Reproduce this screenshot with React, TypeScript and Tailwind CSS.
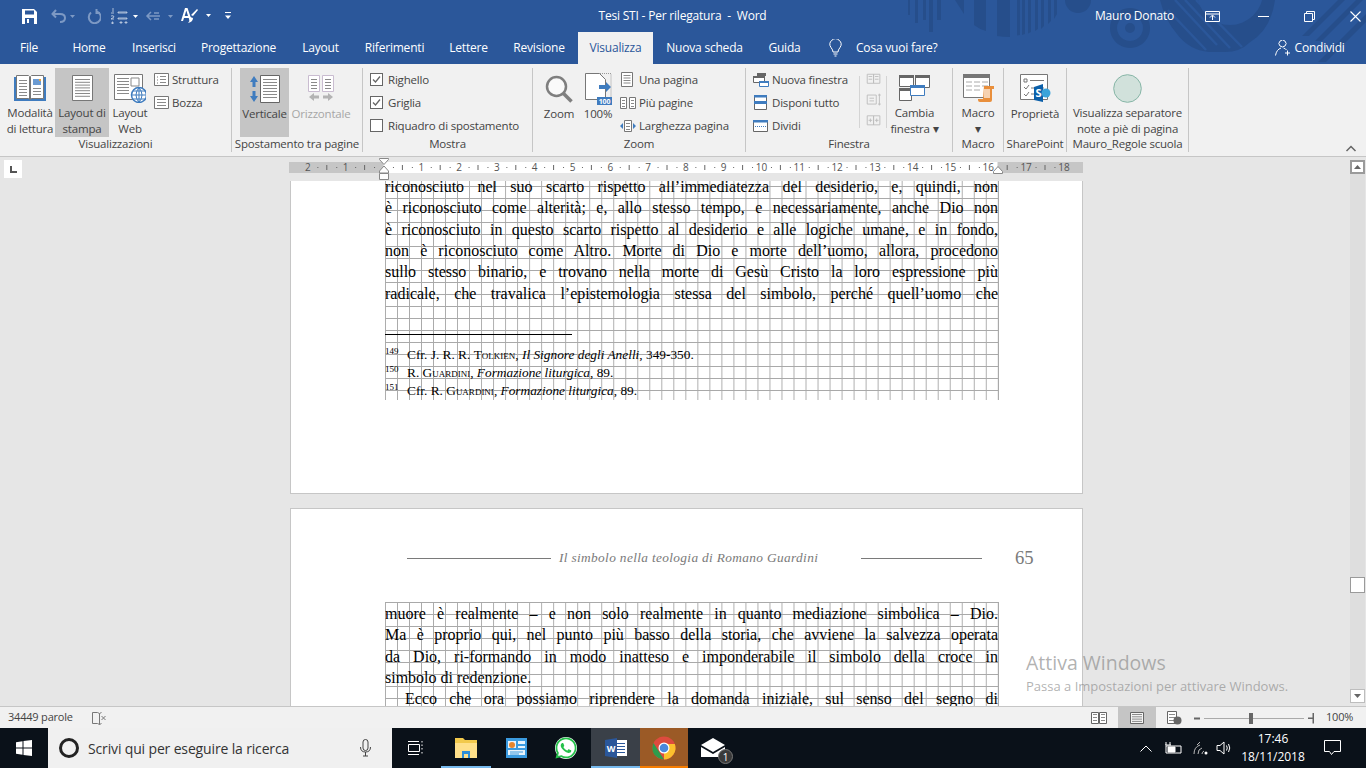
import { ReactNode } from 'react';
import { FaWhatsapp } from 'react-icons/fa';

const bodyLines1 = [
  'riconosciuto nel suo scarto rispetto all’immediatezza del desiderio, e, quindi, non',
  'è riconosciuto come alterità; e, allo stesso tempo, e necessariamente, anche Dio non',
  'è riconosciuto in questo scarto rispetto al desiderio e alle logiche umane, e in fondo,',
  'non è riconosciuto come Altro. Morte di Dio e morte dell’uomo, allora, procedono',
  'sullo stesso binario, e trovano nella morte di Gesù Cristo la loro espressione più',
  'radicale, che travalica l’epistemologia stessa del simbolo, perché quell’uomo che',
];

const bodyLines2 = [
  'muore è realmente – e non solo realmente in quanto mediazione simbolica – Dio.',
  'Ma è proprio qui, nel punto più basso della storia, che avviene la salvezza operata',
  'da Dio, ri-formando in modo inatteso e imponderabile il simbolo della croce in',
];

const tabs = [
  { label: 'File', w: 'w-[58px]' },
  { label: 'Home', w: 'w-[62px]' },
  { label: 'Inserisci', w: 'w-[68px]' },
  { label: 'Progettazione', w: 'w-[101px]' },
  { label: 'Layout', w: 'w-[63px]' },
  { label: 'Riferimenti', w: 'w-[85px]' },
  { label: 'Lettere', w: 'w-[63px]' },
  { label: 'Revisione', w: 'w-[78px]' },
];

const GRID =
  'bg-[linear-gradient(to_right,#a9a9a9_1px,transparent_1px),linear-gradient(to_bottom,#a9a9a9_1px,transparent_1px)] bg-[size:12.02px_12px]';

function TitlePattern() {
  const c = '#264e8b';
  return (
    <svg className="absolute left-0 top-0" width="1366" height="64" viewBox="0 0 1366 64" aria-hidden="true">
      <g fill={c}>
        <rect x="908" y="0" width="2" height="15" />
        <rect x="915" y="0" width="3" height="23" />
        <rect x="923" y="0" width="3" height="20" />
        <rect x="929" y="0" width="4" height="32" />
        <rect x="937" y="0" width="4" height="20" />
        <path d="M955 0h9v14z" />
        <path d="M974 0h12v31q-7-2-12-6z" />
        <path d="M997 0h13v37q-7 0-13-1z" />
        <path d="M1017 0h3v35l-3 .5zM1022 0h3v34l-3 1zM1028 0h3v32l-3 1.500zM1035 0h3v29l-3 2zM1041 0h3v26l-3 3zM1048 0h3v21l-3 3zM1054 0h3v14l-3 5z" />
        <circle cx="1078" cy="0" r="13" />
        <path fillRule="evenodd" d="M1130 8a20 20 0 1 0 .01 0zM1130 15a13 13 0 1 1-.01 0z" />
        <circle cx="1130" cy="28" r="5" />
        <path d="M1160 0h115q-4 30-26 43q-9 9-24 9h-16q-20-2-32-18q-12-14-17-34z" />
        <path d="M1302 36l36-36h7l-36 36zM1315 41l41-41h7l-41 41zM1318 62l48-48v8l-40 40z" />
      </g>
      <g stroke="#2b579a" strokeWidth="2.500" fill="none">
        <path d="M1175 0l42 45M1185 0l45 48M1196 0l46 47M1168 10l38 40" />
      </g>
      <circle cx="1230" cy="-8" r="33" fill="#2b579a" />
    </svg>
  );
}

function QuickAccess() {
  return (
    <div className="flex items-center">
      <svg className="ml-[22px]" width="15" height="15" viewBox="0 0 15 15">
        <path fill="#fff" d="M0 0h12l3 3v12H0z" />
        <path fill="#2b579a" d="M3 1.500h9v4H3zM3 9h9v6H3z" />
        <path fill="#fff" d="M5 10h2v4H5z" />
      </svg>
      <svg className="ml-[14px]" width="24" height="14" viewBox="0 0 24 14" fill="none" stroke="#7d99c4" strokeWidth="2">
        <path d="M5 1L1.500 5 5 8.500M2 5h7q5 0 5 4t-5 4" />
        <path fill="#7d99c4" stroke="none" d="M19 6h5l-2.500 3z" />
      </svg>
      <svg className="ml-[11px]" width="15" height="15" viewBox="0 0 15 15" fill="none" stroke="#7d99c4" strokeWidth="2">
        <path d="M5 3.500A6 6 0 1 0 11 2.600M10.500 0v4h3.500" />
      </svg>
      <svg className="ml-[9px]" width="30" height="16" viewBox="0 0 30 16" fill="#fff">
        <path d="M3 0v4M1 5h3M1 8q3-1 3 1l-3 2h3M8 4h9v1H8zM8 10h9v1H8zM10 14h2v1h-2zM15 14h2v1h-2zM2 14h1v2H2z" stroke="#fff" strokeWidth=".6" fill="none" />
        <path d="M23 7h5l-2.500 3z" />
      </svg>
      <svg className="ml-[5px]" width="28" height="14" viewBox="0 0 28 14" fill="none" stroke="#7d99c4" strokeWidth="1.500">
        <path d="M6 3L2 7l4 4M2 7h13M9 4h5M9 10h5" />
        <path fill="#7d99c4" stroke="none" d="M23 6h5l-2.500 3z" />
      </svg>
      <svg className="ml-[7px]" width="36" height="18" viewBox="0 0 36 18">
        <path fill="#fff" d="M5 1h2.500L12 14H9.700l-1-3H4l-1 3H1zM4.700 9h3.300L6.300 3.500z" />
        <path fill="#fff" d="M17 2l1 1-5 6-2-1zM10 10l3 1q0 4-5 5 2-2 2-6z" />
        <path fill="#fff" d="M26 7h5l-2.500 3z" />
      </svg>
      <svg className="ml-[9px]" width="6" height="8" viewBox="0 0 6 8" fill="#fff">
        <path d="M0 0h6v1H0zM0 3.500h6L3 7z" />
      </svg>
    </div>
  );
}

function TitleBar() {
  return (
    <div className="relative flex h-8 items-center text-white">
      <div className="w-[360px]">
        <QuickAccess />
      </div>
      <div className="w-[645px] text-center text-[12px] whitespace-pre tracking-[-0.2px]">Tesi STI - Per rilegatura  -  Word</div>
      <div className="ml-[90px] w-[92px] text-[12px] tracking-[-0.2px]">Mauro Donato</div>
      <svg className="ml-[18px]" width="15" height="11" viewBox="0 0 15 11" fill="none" stroke="#fff">
        <path d="M.5.500h14v10H.5zM.5 3h14M7.500 9V4.500M5 6.500l2.500-2.500L10 6.500" />
      </svg>
      <svg className="ml-[38px]" width="11" height="1" viewBox="0 0 11 1">
        <rect width="11" height="1" fill="#fff" />
      </svg>
      <svg className="ml-[35px]" width="11" height="11" viewBox="0 0 11 11" fill="none" stroke="#fff">
        <path d="M.5 2.500h8v8h-8zM2.500 2.500v-2h8v8h-2" />
      </svg>
      <svg className="ml-[35px]" width="11" height="11" viewBox="0 0 11 11" stroke="#fff" strokeWidth="1.100">
        <path d="M.5.500l10 10M10.500.500l-10 10" />
      </svg>
    </div>
  );
}

function TabBar() {
  return (
    <div className="relative flex h-8 items-center text-[12px] tracking-[-0.2px] text-white">
      {tabs.map((t) => (
        <div key={t.label} className={`${t.w} text-center`}>
          {t.label}
        </div>
      ))}
      <div className="flex h-8 w-[75px] items-center justify-center bg-[#f1f1f1] text-[#2b579a]">Visualizza</div>
      <div className="w-[103px] text-center">Nuova scheda</div>
      <div className="w-[57px] text-center">Guida</div>
      <svg className="ml-[16px]" width="13" height="18" viewBox="0 0 13 18" fill="none" stroke="#fff">
        <path d="M4 13q0-2-2-4.500a5.500 5.500 0 1 1 9 0Q9 11 9 13zM4.500 15h4M5.500 17h2" />
      </svg>
      <div className="ml-[14px] text-[12px]">Cosa vuoi fare?</div>
      <svg className="ml-[337px]" width="16" height="16" viewBox="0 0 16 16" fill="none" stroke="#fff">
        <path d="M5 6a3.500 3.500 0 1 1 5 0q-2.500 2-5 0zM.5 15.500q1-6 5.500-7.500M8.500 8q2 .5 3 2M12.500 10.500v5M10 13h5" />
      </svg>
      <div className="ml-[4px] text-[12px]">Condividi</div>
    </div>
  );
}

function BigButton({
  icon,
  lines,
  w,
  on,
  off,
}: {
  icon: ReactNode;
  lines: string[];
  w: string;
  on?: boolean;
  off?: boolean;
}) {
  return (
    <div className={`${w} flex h-[69px] flex-col items-center ${on ? 'bg-[#c5c5c5]' : ''} ${off ? 'text-[#a6a6a6]' : ''}`}>
      <div className="flex h-[38px] w-full items-center justify-center pt-[3px]">{icon}</div>
      {lines.map((l) => (
        <div key={l} className="h-4 whitespace-nowrap text-center leading-4">
          {l}
        </div>
      ))}
    </div>
  );
}

function SmallRow({ icon, label, w = 'w-[18px]' }: { icon: ReactNode; label: string; w?: string }) {
  return (
    <div className="flex h-[23px] items-center whitespace-nowrap">
      <div className={`${w} flex shrink-0 justify-start`}>{icon}</div>
      <span>{label}</span>
    </div>
  );
}

function Group({ label, w, children }: { label: string; w: string; children: ReactNode }) {
  return (
    <div className={`${w} relative flex h-[84px] shrink-0 flex-col border-r border-[#c6c6c6]`}>
      <div className="flex h-[72px] pt-[-1px]">{children}</div>
      <div className="-mt-[1px] h-4 whitespace-nowrap text-center leading-4 text-[#444]">{label}</div>
    </div>
  );
}

function Check({ on }: { on?: boolean }) {
  return (
    <svg width="13" height="13" viewBox="0 0 13 13" fill="none">
      <rect x=".5" y=".5" width="12" height="12" fill="#fff" stroke="#666" />
      {on && <path d="M3 6.500l2.500 2.500L10 3.500" stroke="#666" strokeWidth="1.300" />}
    </svg>
  );
}

const TextLines = ({ x, y, n, w, gap = 3 }: { x: number; y: number; n: number; w: number; gap?: number }) => (
  <g stroke="#8a8a8a">
    {Array.from({ length: n }, (_, i) => (
      <path key={i} d={`M${x} ${y + i * gap + 0.5}h${w}`} />
    ))}
  </g>
);

function Ribbon() {
  return (
    <div className="relative flex h-[93px] border-b border-[#c6c6c6] bg-[#f1f1f1] pt-1 text-[#444] text-[11.5px] tracking-[-0.2px]">
      <Group label="Visualizzazioni" w="w-[232px]">
        <div className="ml-[5px] flex pt-[0px]">
          <BigButton
            w="w-[50px]"
            lines={['Modalità', 'di lettura']}
            icon={
              <svg width="32" height="28" viewBox="0 0 32 28">
                <path fill="#3f7cbf" d="M0 3h32v24H0z" />
                <path fill="#fff" stroke="#777" d="M2.500 1.500h12l1 1v23l-1-1h-12zM29.500 1.500h-12l-1 1v23l1-1h12z" />
                <TextLines x={5} y={6} n={6} w={8} />
                <path fill="#6b9bd2" d="M19 5h8v6h-8z" />
                <path fill="#e8a33d" d="M25 5h2v2h-2z" />
                <TextLines x={19} y={14} n={3} w={8} />
              </svg>
            }
          />
          <BigButton
            w="w-[54px]"
            on
            lines={['Layout di', 'stampa']}
            icon={
              <svg width="21" height="26" viewBox="0 0 21 26">
                <path fill="#fff" stroke="#777" d="M.5.500h20v25H.5z" />
                <TextLines x={3} y={4} n={7} w={15} gap={2.800} />
              </svg>
            }
          />
          <BigButton
            w="w-[42px]"
            lines={['Layout', 'Web']}
            icon={
              <svg width="32" height="29" viewBox="0 0 32 29">
                <path fill="#fff" stroke="#777" d="M.5.500h28v25H.5z" />
                <TextLines x={3} y={4} n={6} w={12} />
                <path fill="#fff" stroke="#888" d="M17 4h8v8h-8z" />
                <circle cx="25" cy="21" r="7.500" fill="#fff" stroke="#3f7cbf" strokeWidth="1.500" />
                <path stroke="#3f7cbf" fill="none" d="M17.500 21h15M25 13.500v15M19 17h12M19 25h12M25 13.500q-6 7.500 0 15q6-7.500 0-15" />
              </svg>
            }
          />
        </div>
        <div className="ml-[3px] flex flex-col">
          <SmallRow
            label="Struttura"
            icon={
              <svg width="15" height="13" viewBox="0 0 15 13">
                <path fill="#fff" stroke="#777" d="M.5.500h14v12H.5z" />
                <path stroke="#777" strokeDasharray="1 1" d="M3 4h2M3 7h2M3 10h2" />
                <TextLines x={6} y={3} n={3} w={6} />
              </svg>
            }
          />
          <SmallRow
            label="Bozza"
            icon={
              <svg width="15" height="13" viewBox="0 0 15 13">
                <path fill="#fff" stroke="#777" d="M.5.500h14v12H.5z" />
                <TextLines x={3} y={3} n={3} w={9} />
              </svg>
            }
          />
        </div>
      </Group>
      <Group label="Spostamento tra pagine" w="w-[131px]">
        <div className="ml-[8px] flex">
          <BigButton
            w="w-[49px]"
            on
            lines={['Verticale']}
            icon={
              <svg width="30" height="28" viewBox="0 0 30 28">
                <path fill="#fff" stroke="#666" d="M10.500.500h19v27h-19z" />
                <TextLines x={13} y={4} n={7} w={14} />
                <path fill="#3f7cbf" d="M4 1l4 6H5.500v5h-3V7H0zM4 27l-4-6h2.500v-5h3v5H8z" />
              </svg>
            }
          />
          <div className="w-[2px]" />
          <BigButton
            w="w-[60px]"
            off
            lines={['Orizzontale']}
            icon={
              <svg width="26" height="27" viewBox="0 0 26 27">
                <path fill="#fff" stroke="#c9bcd0" d="M.5.500h11v16H.5zM14.500.500h11v16h-11z" />
                <TextLines x={3} y={4} n={4} w={6} />
                <TextLines x={17} y={4} n={4} w={6} />
                <path fill="#b3b3b3" d="M1 22l5-4v2.500h5v3H6V26zM25 22l-5-4v2.500h-5v3h5V26z" />
              </svg>
            }
          />
        </div>
      </Group>
      <Group label="Mostra" w="w-[170px]">
        <div className="ml-[7px] flex flex-col">
          <SmallRow w="w-[18px]" icon={<Check on />} label="Righello" />
          <SmallRow w="w-[18px]" icon={<Check on />} label="Griglia" />
          <SmallRow w="w-[18px]" icon={<Check />} label="Riquadro di spostamento" />
        </div>
      </Group>
      <Group label="Zoom" w="w-[213px]">
        <div className="ml-[5px] flex">
          <BigButton
            w="w-[42px]"
            lines={['Zoom']}
            icon={
              <svg width="28" height="28" viewBox="0 0 28 28" fill="none" stroke="#7f7f7f">
                <circle cx="11.500" cy="11.500" r="9.500" strokeWidth="2.500" fill="#fafafa" />
                <path d="M18.500 18.500l8 8" strokeWidth="3.500" />
              </svg>
            }
          />
          <BigButton
            w="w-[36px]"
            lines={['100%']}
            icon={
              <svg width="27" height="32" viewBox="0 0 27 32">
                <path fill="#fff" stroke="#777" d="M.5.500h14l6 6v20H.5z" />
                <path stroke="#999" strokeDasharray="1 1" fill="none" d="M15 .500h11v24" />
                <path fill="#3f7cbf" d="M14 12h7V9l5 5-5 5v-3h-7z" />
                <rect x="12" y="24" width="15" height="8" fill="#3f7cbf" />
                <text x="19.500" y="31" fontSize="7" fontWeight="bold" fill="#fff" textAnchor="middle">
                  100
                </text>
              </svg>
            }
          />
          <div className="ml-[4px] flex flex-col">
            <SmallRow
              w="w-[19px]"
              label="Una pagina"
              icon={
                <svg className="ml-[1px]" width="12" height="15" viewBox="0 0 12 15">
                  <path fill="#fff" stroke="#777" d="M.5.500h11v14H.5z" />
                  <TextLines x={2.500} y={3} n={4} w={7} gap={2.500} />
                </svg>
              }
            />
            <SmallRow
              w="w-[19px]"
              label="Più pagine"
              icon={
                <svg width="16" height="12" viewBox="0 0 16 12">
                  <path fill="#fff" stroke="#777" d="M.5.500h6v11h-6zM9.500.500h6v11h-6z" />
                  <TextLines x={2} y={3} n={3} w={3} />
                  <TextLines x={11} y={3} n={3} w={3} />
                </svg>
              }
            />
            <SmallRow
              w="w-[19px]"
              label="Larghezza pagina"
              icon={
                <svg width="16" height="12" viewBox="0 0 16 12">
                  <path fill="#fff" stroke="#777" d="M4.500.500h7v11h-7z" />
                  <TextLines x={6} y={3} n={3} w={4} />
                  <path fill="#3f7cbf" d="M0 6l3-3v6zM16 6l-3-3v6z" />
                </svg>
              }
            />
          </div>
        </div>
      </Group>
      <Group label="Finestra" w="w-[207px]">
        <div className="ml-[7px] flex flex-col">
          <SmallRow
            w="w-[19px]"
            label="Nuova finestra"
            icon={
              <svg width="16" height="14" viewBox="0 0 16 14">
                <path fill="#fff" stroke="#666" d="M.5 3.500h11v6H.5z" />
                <path fill="#666" d="M0 3h12v2H0zM4 0h9v3H4z" />
                <path fill="#fff" stroke="#3f7cbf" d="M6.500 8.500h9v5h-9z" />
                <path fill="#3f7cbf" d="M6 8h10v2H6z" />
              </svg>
            }
          />
          <SmallRow
            w="w-[19px]"
            label="Disponi tutto"
            icon={
              <svg className="ml-[1px]" width="13" height="15" viewBox="0 0 13 15">
                <path fill="#fff" stroke="#666" d="M.5.500h12v14H.5z" />
                <path fill="#3f7cbf" d="M0 0h13v2.500H0zM0 6h13v3H0z" />
              </svg>
            }
          />
          <SmallRow
            w="w-[19px]"
            label="Dividi"
            icon={
              <svg width="15" height="12" viewBox="0 0 15 12">
                <path fill="#fff" stroke="#666" d="M.5.500h14v11H.5z" />
                <path fill="#3f7cbf" d="M0 0h15v2.500H0z" />
                <path stroke="#3f7cbf" strokeDasharray="1 1" d="M2 6.500h11" />
              </svg>
            }
          />
        </div>
        <div className="ml-[11px] flex flex-col items-start border-l border-[#d4d4d4] pl-[6px] h-[52px] mt-[8px]">
          <svg className="-mt-[4px]" width="16" height="62" viewBox="0 0 16 62" fill="none" stroke="#bdbdbd">
            <path d="M.5 2.500h7v10h-7zM7.500 2.500h7v10h-7zM2 5h4M2 8h4M9 5h4M9 8h4" />
            <path d="M.5 25.500h10v10H.5zM3 29h5M3 32h5M14 24v13M12.500 25.500h3M12.500 35.500h3" />
            <path d="M.5 48.500h7v10h-7zM7.500 48.500h7v10h-7zM2 53.500h4M4 51.500v4M9 53.500h4M11 51.500v4" />
          </svg>
        </div>
        <div className="ml-[4px] border-l border-[#d4d4d4] h-[52px] mt-[8px]" />
        <div className="ml-[0px]">
          <BigButton
            w="w-[55px]"
            lines={['Cambia', 'finestra ▾']}
            icon={
              <svg width="31" height="26" viewBox="0 0 31 26">
                <path fill="#fff" stroke="#666" d="M.5.500h14v11H.5zM16.500.500h14v12h-14zM.5 13.500h12v12H.5z" />
                <path fill="#666" d="M0 0h15v3H0zM16 0h15v3H16zM0 13h13v3H0z" />
                <path fill="#fff" stroke="#3f7cbf" d="M11.500 10.500h14v10h-14z" />
                <path fill="#3f7cbf" d="M11 10h15v3H11z" />
              </svg>
            }
          />
        </div>
      </Group>
      <Group label="Macro" w="w-[51px]">
        <BigButton
          w="w-[50px]"
          lines={['Macro', '▾']}
          icon={
            <svg width="31" height="28" viewBox="0 0 31 28">
              <path fill="#fff" stroke="#777" d="M.5.500h26v23H.5z" />
              <path fill="#777" d="M0 0h27v4H0z" />
              <g stroke="#aaa">
                <path d="M3 8h6M11 8h6M19 8h6M3 12h6M11 12h6M19 12h6M3 16h6M11 16h6" />
              </g>
              <path fill="#e98f3c" d="M21 12h10v3h-2v11q0 2-2 2H17q-2 0-2-2v-1h2l3 0z" />
              <path fill="#fff" d="M21 15h6v9h-6z" opacity=".6" />
            </svg>
          }
        />
      </Group>
      <Group label="SharePoint" w="w-[63px]">
        <BigButton
          w="w-[62px]"
          lines={['Proprietà']}
          icon={
            <svg width="31" height="29" viewBox="0 0 31 29">
              <path fill="#fff" stroke="#777" d="M.5.500h27v25H.5z" />
              <path stroke="#777" fill="none" d="M4 5h3v3H4zM10 6.500h14M4 13l2 2 3-4M11 14h13M4 20l2 2 3-4M11 20h3" />
              <path fill="#0b5fa9" d="M14 13l9-3v18l-9-2z" />
              <circle cx="26" cy="19" r="4.500" fill="#3ba3d9" />
              <text x="18.500" y="23" fontSize="11" fontWeight="bold" fill="#fff" textAnchor="middle">
                S
              </text>
            </svg>
          }
        />
      </Group>
      <Group label="Mauro_Regole scuola" w="w-[122px]">
        <BigButton
          w="w-[121px]"
          lines={['Visualizza separatore', 'note a piè di pagina']}
          icon={
            <svg width="29" height="29" viewBox="0 0 29 29">
              <circle cx="14.500" cy="14.500" r="13.800" fill="#d1e1db" stroke="#86b5a6" />
            </svg>
          }
        />
      </Group>
      <svg className="absolute left-[1345px] top-[81px]" width="12" height="7" viewBox="0 0 12 7" fill="none" stroke="#666" strokeWidth="1.500">
        <path d="M1.500 6L6 1.500 10.500 6" />
      </svg>
    </div>
  );
}

function Ruler() {
  const unit = 37.8;
  const zero = 94.5;
  const nums: number[] = [];
  for (let i = -2; i <= 18; i++) nums.push(i);
  return (
    <svg width="794" height="24" viewBox="0 0 794 24" className="block">
      <rect x="0" y="5" width="794" height="11" fill="#c6c6c6" />
      <rect x={zero} y="5" width="614" height="11" fill="#fff" />
      {nums.map((n) => {
        const x = zero + n * unit;
        return (
          <g key={n}>
            {n !== 0 && (
              <text x={x} y="14" fontSize="10" fill="#555" textAnchor="middle" fontFamily="'Open Sans', sans-serif">
                {Math.abs(n)}
              </text>
            )}
            {n < 18 && <path d={`M${x + unit / 2} 8v5`} stroke="#666" />}
            {n < 18 && <rect x={x + unit / 4} y="10" width="1" height="1" fill="#666" />}
            {n < 18 && <rect x={x + (unit * 3) / 4} y="10" width="1" height="1" fill="#666" />}
          </g>
        );
      })}
      <g fill="#fff" stroke="#888">
        <path d="M90.500 1.500h9v1l-4.500 5-4.500-5z" />
        <path d="M95 9l4.500 5v2h-9v-2z" />
        <path d="M90.500 16.500h9v6h-9z" />
        <path d="M709 9.500l4.500 5v2h-9v-2z" />
      </g>
    </svg>
  );
}

function DocLine({ text, indent }: { text: string; indent?: boolean }) {
  return <div className={`h-[21.33px] whitespace-nowrap leading-[21.33px] [text-align-last:justify] ${indent ? 'pl-[20px]' : ''}`}>{text}</div>;
}

function Note({ n, children }: { n: number; children: ReactNode }) {
  return (
    <div className="flex h-[18px] items-start whitespace-nowrap text-[13.33px] leading-[18px]">
      <span className="w-[22px] shrink-0 text-[9px] leading-[11px]">{n}</span>
      <span>{children}</span>
    </div>
  );
}

function Pages() {
  return (
    <div className="min-h-0 flex-1 overflow-hidden pl-[290px] font-['Liberation_Serif',serif] text-[16px] text-black">
      <div className="h-[313px] w-[793px] overflow-hidden border border-t-0 border-[#c6c6c6] bg-white">
        <div className={`-mt-[5px] ml-[94px] h-[224px] w-[614px] overflow-hidden border-r border-[#a9a9a9] bg-[position:0_10px] ${GRID}`}>
          {bodyLines1.map((l) => (
            <DocLine key={l} text={l} />
          ))}
          <div className="mt-[30px] h-px w-[187px] bg-black" />
          <div className="mt-[11px]">
            <Note n={149}>
              Cfr. J. R. R. <span className="[font-variant:small-caps]">Tolkien</span>, <i>Il Signore degli Anelli</i>, 349-350.
            </Note>
            <Note n={150}>
              R. <span className="[font-variant:small-caps]">Guardini</span>, <i>Formazione liturgica</i>, 89.
            </Note>
            <Note n={151}>
              Cfr. R. <span className="[font-variant:small-caps]">Guardini</span>, <i>Formazione liturgica</i>, 89.
            </Note>
          </div>
        </div>
      </div>
      <div className="mt-[14px] h-[260px] w-[793px] border border-b-0 border-[#c6c6c6] bg-white">
        <div className="ml-[116px] mt-[39px] flex h-[20px] items-center text-[#7a7a7a]">
          <div className="h-px w-[144px] bg-[#7a7a7a]" />
          <i className="ml-[8px] w-[294px] whitespace-nowrap text-[13.33px] tracking-[0.35px]">Il simbolo nella teologia di Romano Guardini</i>
          <div className="ml-[8px] h-px w-[121px] bg-[#7a7a7a]" />
          <span className="ml-[33px] text-[18.67px]">65</span>
        </div>
        <div className={`ml-[94px] mt-[34px] h-[120px] w-[614px] overflow-hidden border-r border-[#a9a9a9] ${GRID}`}>
          <div className="pt-[1px]">
            {bodyLines2.map((l) => (
              <DocLine key={l} text={l} />
            ))}
            <div className="h-[21.33px] leading-[21.33px]">simbolo di redenzione.</div>
            <DocLine indent text="Ecco che ora possiamo riprendere la domanda iniziale, sul senso del segno di" />
          </div>
        </div>
      </div>
    </div>
  );
}

function ScrollBar() {
  return (
    <div className="flex w-[17px] shrink-0 flex-col items-center bg-[#e6e6e6] pt-[3px]">
      <div className="flex h-[14px] w-[15px] items-center justify-center border-2 border-[#9a9a9a] bg-white">
        <svg width="7" height="4" viewBox="0 0 7 4">
          <path fill="#666" d="M3.500 0L7 4H0z" />
        </svg>
      </div>
      <div className="flex w-[15px] flex-1 flex-col bg-[#dedede]">
        <div className="ml-0 mt-[403px] h-[16px] w-[15px] border border-[#9a9a9a] bg-white" />
      </div>
      <div className="mb-[3px] flex h-[14px] w-[15px] items-center justify-center border border-[#bdbdbd] bg-white">
        <svg width="7" height="4" viewBox="0 0 7 4">
          <path fill="#666" d="M3.500 4L7 0H0z" />
        </svg>
      </div>
    </div>
  );
}

function StatusBar() {
  return (
    <div className="flex h-[22px] items-center border-t border-[#c6c6c6] bg-[#f1f1f1] text-[11px] tracking-[-0.2px] text-[#444]">
      <span className="ml-[8px] w-[84px]">34449 parole</span>
      <svg width="15" height="14" viewBox="0 0 15 14" fill="none" stroke="#777">
        <path d="M.5 1.500h5l2 1v11l-2-1h-5zM7.500 2.500l2-1M9.500 12.500l-2 1" />
        <path d="M9.500 5l4 4M13.500 5l-4 4" />
      </svg>
      <svg className="ml-[984px]" width="16" height="13" viewBox="0 0 16 13">
        <path fill="#fff" stroke="#666" d="M.5 1.500h7v11h-7zM8.500 1.500h7v11h-7z" />
        <TextLines x={2} y={3} n={3} w={4} />
        <TextLines x={10} y={3} n={3} w={4} />
      </svg>
      <div className="ml-[11px] flex h-[21px] w-[38px] items-center justify-center bg-[#c5c5c5]">
        <svg width="14" height="12" viewBox="0 0 14 12">
          <path fill="#f4f4f4" stroke="#666" d="M.5.500h13v11H.5z" />
          <TextLines x={2} y={2} n={4} w={10} gap={2.300} />
        </svg>
      </div>
      <svg className="ml-[11px]" width="15" height="14" viewBox="0 0 15 14">
        <path fill="#fff" stroke="#666" d="M.5.500h9v12h-9z" />
        <TextLines x={2} y={3} n={3} w={6} />
        <circle cx="10.500" cy="9.500" r="4" fill="#666" />
      </svg>
      <svg className="ml-[12px]" width="120" height="14" viewBox="0 0 120 14">
        <path d="M0 6.500h6v2H0z" fill="#666" />
        <path d="M10 7.500h100" stroke="#aaa" />
        <rect x="55" y="2" width="4" height="11" fill="#666" />
        <path d="M114 6.500h4.500V2h1.500v4.500h4.500v1.500H120v4.500h-1.500V8H114z" fill="#666" />
      </svg>
      <span className="ml-[12px] text-[11px]">100%</span>
    </div>
  );
}

function Chrome() {
  return (
    <svg width="24" height="24" viewBox="0 0 24 24">
      <circle cx="12" cy="12" r="11.500" fill="#dd4b3e" />
      <path fill="#2e9c4c" d="M1.500 7L12 23.500A11.500 11.500 0 0 1 1.500 7z" />
      <path fill="#fbc02d" d="M12 23.500A11.500 11.500 0 0 0 22.800 8H12z" />
      <circle cx="12" cy="12" r="5.500" fill="#fff" />
      <circle cx="12" cy="12" r="4.300" fill="#4a89dc" />
    </svg>
  );
}

function TaskIcon({ children, w = 'w-[50px]', cls = '', bar = '' }: { children: ReactNode; w?: string; cls?: string; bar?: string }) {
  return (
    <div className={`relative flex h-10 ${w} shrink-0 items-center justify-center ${cls}`}>
      {children}
      {bar && <div className={`absolute bottom-0 left-0 right-0 h-[2px] ${bar}`} />}
    </div>
  );
}

function TaskBar() {
  return (
    <div className="flex h-10 items-center bg-[#0a1119] text-white">
      <div className="flex h-10 w-12 shrink-0 items-center justify-center">
        <svg width="16" height="16" viewBox="0 0 16 16" fill="#fff">
          <path d="M0 2.300l6.500-1v6.200H0zM7.500 1.100L16 0v7.500H7.500zM0 8.500h6.500v6.200l-6.500-1zM7.500 8.500H16V16l-8.500-1.100z" />
        </svg>
      </div>
      <div className="flex h-10 w-[344px] shrink-0 items-center bg-[#f0f0f0] text-[14px] text-[#333]">
        <div className="ml-[11px] h-[20px] w-[20px] rounded-full border-[3px] border-[#222] bg-transparent" />
        <span className="ml-[9px] w-[272px] tracking-[-0.15px]">Scrivi qui per eseguire la ricerca</span>
        <svg width="11" height="18" viewBox="0 0 11 18" fill="none" stroke="#444">
          <rect x="3" y=".5" width="5" height="11" rx="2.500" />
          <path d="M.5 8q0 5 5 5t5-5M5.500 13v4M3 17h5" />
        </svg>
      </div>
      <TaskIcon w="w-[48px]">
        <svg width="16" height="16" viewBox="0 0 16 16" fill="none" stroke="#fff">
          <path d="M.5 4.500h11v7H.5zM0 1.500h11M0 14.500h11M14 1v1.500M14 4.500v1.500M14 8v1.500M14 12v1.500" />
        </svg>
      </TaskIcon>
      <TaskIcon w="w-[50px]" bar="bg-[#76b9ed]" cls="ml-[1px]">
        <svg width="22" height="22" viewBox="0 0 22 22">
          <path fill="#f2c94c" d="M0 1h8l2 2h12v18H0z" />
          <path fill="#ffe08a" d="M0 6h22v15H0z" />
          <path fill="#2f8fd8" d="M7 14h8v7h-2v-4H9v4H7z" />
        </svg>
      </TaskIcon>
      <TaskIcon w="w-[50px]">
        <svg width="21" height="20" viewBox="0 0 21 20">
          <rect width="21" height="20" fill="#3b9be0" />
          <path fill="#e9f3fb" d="M2 3h8v7H2zM12 3h7v3h-7zM12 8h7v2h-7zM2 12h17v5H2z" />
          <circle cx="6" cy="7" r="3" fill="#e8862d" />
          <path stroke="#3b9be0" d="M4 14h13M4 16h9" />
        </svg>
      </TaskIcon>
      <TaskIcon w="w-[50px]">
        <div className="flex h-[22px] w-[22px] items-center justify-center rounded-full bg-white">
          <FaWhatsapp className="h-[24px] w-[24px] text-[#25c04a]" />
        </div>
      </TaskIcon>
      <TaskIcon w="w-[49px]" cls="-ml-[25px] bg-[#3a4048] ml-0" bar="bg-[#76b9ed]">
        <svg width="22" height="20" viewBox="0 0 22 20">
          <path fill="#fff" d="M9 2h13v16H9z" />
          <path stroke="#2b579a" d="M12 5.500h8M12 8.500h8M12 11.500h8M12 14.500h8" />
          <path fill="#2b579a" d="M0 2l12-2v20L0 18z" />
          <text x="6" y="13.500" fontSize="9" fontWeight="bold" fill="#fff" textAnchor="middle">
            W
          </text>
        </svg>
      </TaskIcon>
      <TaskIcon w="w-[48px]" cls="bg-[#9b5a26]" bar="bg-[#f57c00]">
        <Chrome />
      </TaskIcon>
      <TaskIcon w="w-[50px]">
        <div className="relative">
          <svg width="24" height="20" viewBox="0 0 24 20" fill="#fff">
            <path d="M0 7L12 0l12 7-12 7z" />
            <path d="M0 9l12 7 12-7v10H0z" />
          </svg>
          <div className="absolute -bottom-[6px] -right-[8px] flex h-[15px] w-[15px] items-center justify-center rounded-full border border-[#777] bg-[#3a3a3a] text-[10px] leading-none">1</div>
        </div>
      </TaskIcon>
      <div className="flex-1" />
      <svg width="12" height="7" viewBox="0 0 12 7" fill="none" stroke="#fff">
        <path d="M.5 6.500L6 1l5.500 5.500" />
      </svg>
      <svg className="ml-[13px]" width="17" height="12" viewBox="0 0 17 12" fill="none" stroke="#fff">
        <path d="M1 4h15v7H1z" />
        <path d="M3 5h7v5H3z" fill="#fff" />
        <path d="M1 0v3M5 0v3M0 3h6" />
      </svg>
      <svg className="ml-[11px]" width="16" height="14" viewBox="0 0 16 14" fill="none" stroke="#bbb">
        <path d="M1 13q0-7 6-9M5 13q0-5 4-6M9 13q0-2 2-3M7 1l-3 3" />
        <circle cx="13" cy="12" r="1.500" fill="#fff" stroke="none" />
      </svg>
      <svg className="ml-[7px]" width="16" height="14" viewBox="0 0 16 14" fill="none" stroke="#fff">
        <path d="M1 4.500h3L8 1v12L4 9.500H1zM10.500 4.500q1.500 2.500 0 5M12.500 3q2.500 4 0 8" />
      </svg>
      <div className="ml-[7px] w-[68px] text-center text-[12px] leading-[18px]">
        <div>17:46</div>
        <div className="whitespace-nowrap">18/11/2018</div>
      </div>
      <svg className="ml-[17px] mr-[25px]" width="17" height="16" viewBox="0 0 17 16" fill="none" stroke="#fff">
        <path d="M.5.500h16v11H10l-2.500 3-2-3h-5z" />
      </svg>
    </div>
  );
}

export default function App() {
  return (
    <div className="relative flex h-[768px] w-[1366px] flex-col overflow-hidden bg-[#e6e6e6] font-['Open_Sans',sans-serif]">
      <div className="relative h-16 bg-[#2b579a]">
        <TitlePattern />
        <TitleBar />
        <TabBar />
      </div>
      <Ribbon />
      <div className="flex min-h-0 flex-1">
        <div className="flex min-w-0 flex-1 flex-col">
          <div className="flex h-[24px] shrink-0">
            <div className="ml-[4px] mt-[3px] flex h-[18px] w-[18px] items-center justify-center bg-white">
              <svg width="7" height="7" viewBox="0 0 7 7">
                <path fill="#555" d="M0 0h2v5h5v2H0z" />
              </svg>
            </div>
            <div className="ml-[267px]">
              <Ruler />
            </div>
          </div>
          <Pages />
        </div>
        <ScrollBar />
      </div>
      <StatusBar />
      <TaskBar />
      <div className="pointer-events-none absolute left-[1026px] top-[650px] text-[#8f8f8f]/70">
        <div className="text-[19.5px] leading-[26px]">Attiva Windows</div>
        <div className="mt-[1px] whitespace-nowrap text-[13px] leading-[18px]">Passa a Impostazioni per attivare Windows.</div>
      </div>
    </div>
  );
}
